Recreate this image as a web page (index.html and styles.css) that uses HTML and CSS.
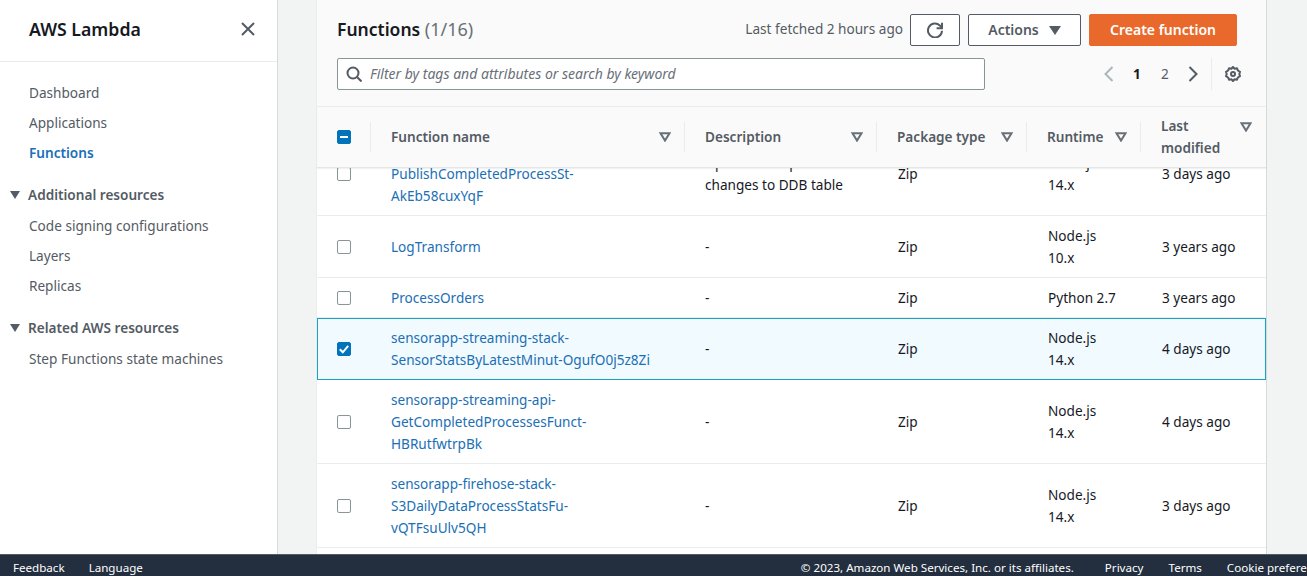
FILE: index.html
```html
<!DOCTYPE html>
<html lang="en">
<head>
<meta charset="utf-8">
<title>AWS Lambda</title>
<link rel="stylesheet" href="styles.css">
</head>
<body>
<div class="shell">
  <aside class="side">
    <div class="side-head">
      <span class="brand">AWS Lambda</span>
      <svg class="close" viewBox="0 0 16 16" width="16" height="16"><path d="M2 2l12 12M14 2L2 14"/></svg>
    </div>
    <nav class="nav">
      <a class="nav-link">Dashboard</a>
      <a class="nav-link">Applications</a>
      <a class="nav-link active">Functions</a>
    </nav>
    <h3 class="nav-group"><span class="tri"></span>Additional resources</h3>
    <nav class="nav sub">
      <a class="nav-link">Code signing configurations</a>
      <a class="nav-link">Layers</a>
      <a class="nav-link">Replicas</a>
    </nav>
    <h3 class="nav-group"><span class="tri"></span>Related AWS resources</h3>
    <nav class="nav sub">
      <a class="nav-link">Step Functions state machines</a>
    </nav>
  </aside>
  <main class="main">
    <section class="card">
      <header class="card-head">
        <div class="title-row">
          <h2 class="title">Functions <span class="count">(1/16)</span></h2>
          <span class="fetched">Last fetched 2 hours ago</span>
          <button class="btn icon-btn"><svg viewBox="0 0 16 16" width="16" height="16"><path d="M15 8.7A7 7 0 1 1 12.8 3.4L14.6 5.6"/><path d="M15 .8V6.2H9.6"/></svg></button>
          <button class="btn actions">Actions<span class="btn-tri"></span></button>
          <button class="btn primary">Create function</button>
        </div>
        <div class="filter-row">
          <div class="search">
            <svg viewBox="0 0 16 16" width="16" height="16"><circle cx="7" cy="7" r="5.5"/><path d="M11 11l4.5 4.5"/></svg>
            <span class="placeholder">Filter by tags and attributes or search by keyword</span>
          </div>
          <div class="pager">
            <svg class="chev off" viewBox="0 0 16 16" width="16" height="16"><path d="M11.5 1L4.5 8l7 7"/></svg>
            <span class="page cur">1</span>
            <span class="page">2</span>
            <svg class="chev" viewBox="0 0 16 16" width="16" height="16"><path d="M4.5 1l7 7-7 7"/></svg>
          </div>
          <svg class="gear" viewBox="0 0 16 16" width="16" height="16"><circle cx="8" cy="8" r="2"/><path d="M8 1l1.6 1.7 2.4-.4.9 2.2 2.1 1.3-.7 2.2.7 2.2-2.1 1.3-.9 2.2-2.4-.4L8 15l-1.6-1.7-2.4.4-.9-2.2-2.1-1.3.7-2.2-.7-2.2 2.1-1.3.9-2.2 2.4.4z"/></svg>
        </div>
      </header>
      <div class="thead grid">
        <div class="th check"><span class="box on"><i class="dash"></i></span></div>
        <div class="th sep">Function name<svg class="sort" viewBox="0 0 12 10" width="12" height="10"><path d="M1.5 1.2h9L6 8.6z"/></svg></div>
        <div class="th sep">Description<svg class="sort" viewBox="0 0 12 10" width="12" height="10"><path d="M1.5 1.2h9L6 8.6z"/></svg></div>
        <div class="th sep">Package type<svg class="sort" viewBox="0 0 12 10" width="12" height="10"><path d="M1.5 1.2h9L6 8.6z"/></svg></div>
        <div class="th sep">Runtime<svg class="sort" viewBox="0 0 12 10" width="12" height="10"><path d="M1.5 1.2h9L6 8.6z"/></svg></div>
        <div class="th sep last">Last modified<svg class="sort" viewBox="0 0 12 10" width="12" height="10"><path d="M1.5 1.2h9L6 8.6z"/></svg></div>
      </div>
      <div class="tbody">
        <div class="rows">
          <div class="row grid">
            <div class="td check"><span class="box"></span></div>
            <div class="td name"><a>sensorapp-streaming-api-PublishCompletedProcessSt-AkEb58cuxYqF</a></div>
            <div class="td">Updates completed changes to DDB table</div>
            <div class="td">Zip</div>
            <div class="td">Node.js 14.x</div>
            <div class="td">3 days ago</div>
          </div>
          <div class="row grid">
            <div class="td check"><span class="box"></span></div>
            <div class="td name"><a>LogTransform</a></div>
            <div class="td">-</div>
            <div class="td">Zip</div>
            <div class="td">Node.js 10.x</div>
            <div class="td">3 years ago</div>
          </div>
          <div class="row grid">
            <div class="td check"><span class="box"></span></div>
            <div class="td name"><a>ProcessOrders</a></div>
            <div class="td">-</div>
            <div class="td">Zip</div>
            <div class="td">Python 2.7</div>
            <div class="td">3 years ago</div>
          </div>
          <div class="row grid selected">
            <div class="td check"><span class="box on"><svg viewBox="0 0 14 14" width="14" height="14"><path d="M2.8 7.3l3 3 5.4-6.4"/></svg></span></div>
            <div class="td name"><a>sensorapp-streaming-stack-SensorStatsByLatestMinut-OgufO0j5z8Zi</a></div>
            <div class="td">-</div>
            <div class="td">Zip</div>
            <div class="td">Node.js 14.x</div>
            <div class="td">4 days ago</div>
          </div>
          <div class="row grid">
            <div class="td check"><span class="box"></span></div>
            <div class="td name"><a>sensorapp-streaming-api-GetCompletedProcessesFunct-HBRutfwtrpBk</a></div>
            <div class="td">-</div>
            <div class="td">Zip</div>
            <div class="td">Node.js 14.x</div>
            <div class="td">4 days ago</div>
          </div>
          <div class="row grid">
            <div class="td check"><span class="box"></span></div>
            <div class="td name"><a>sensorapp-firehose-stack-S3DailyDataProcessStatsFu-vQTFsuUlv5QH</a></div>
            <div class="td">-</div>
            <div class="td">Zip</div>
            <div class="td">Node.js 14.x</div>
            <div class="td">3 days ago</div>
          </div>
        </div>
      </div>
    </section>
  </main>
</div>
<footer class="foot">
  <a class="foot-link">Feedback</a>
  <a class="foot-link lang">Language</a>
  <span class="copy">© 2023, Amazon Web Services, Inc. or its affiliates.</span>
  <a class="foot-link priv">Privacy</a>
  <a class="foot-link terms">Terms</a>
  <a class="foot-link cookie">Cookie preferences</a>
</footer>
</body>
</html>
```
FILE: styles.css
```css
* { box-sizing: border-box; }
html, body { margin: 0; height: 100%; overflow: hidden; }
body {
  width: 1307px; height: 576px;
  display: flex; flex-direction: column;
  font: 13.6px/22px "Noto Sans", sans-serif;
  color: #16191f;
  background: #f2f3f3;
}
.shell { display: flex; height: 554px; flex: none; overflow: hidden; }
.side { width: 278px; flex: none; background: #fff; border-right: 1px solid #d5dbdb; }
.side-head {
  height: 62px; border-bottom: 1px solid #eaeded;
  display: flex; align-items: center; justify-content: space-between;
  padding: 0 21px 3px 29px;
}
.brand { font-size: 17.7px; font-weight: 600; color: #16191f; }
.close { fill: none; stroke: #545b64; stroke-width: 2; }
.nav { display: flex; flex-direction: column; gap: 8px; padding: 20px 29px 0; }
.nav.sub { padding-top: 9px; }
.nav-link { color: #545b64; }
.nav-link.active { color: #1a6fb5; font-weight: 600; }
.nav-group {
  margin: 20px 0 0; padding-left: 10px;
  font-size: 13.6px; font-weight: 600; color: #545b64; line-height: 22px;
  display: flex; align-items: center; gap: 8px;
}
.tri { width: 0; height: 0; border: 5px solid transparent; border-top: 8px solid #545b64; border-bottom: 0; }
.main { flex: 1; padding: 0 40px 0 38px; overflow: hidden; }
.card { width: 951px; height: 100%; background: #fff; border-left: 1px solid #eaeded; border-right: 1px solid #d5dbdb; display: flex; flex-direction: column; }
.card-head { background: #fafafa; border-bottom: 1px solid #eaeded; height: 107px; padding: 14px 25px 0 20px; flex: none; }
.title-row { display: flex; align-items: center; height: 32px; padding-right: 4px; }
.title { margin: 0 0 2px; font-size: 17.5px; font-weight: 600; flex: 1; line-height: 30px; }
.count { font-weight: 400; font-size: 18px; color: #687078; }
.fetched { color: #545b64; margin: 0 7px 2px 0; }
.btn { height: 32px; border: 1px solid #545b64; border-radius: 2px; background: #fff; color: #545b64; font: 600 14px/20px "Noto Sans", sans-serif; padding: 0; display: flex; align-items: center; justify-content: center; }
.icon-btn { width: 50px; margin-right: 8px; }
.icon-btn svg { fill: none; stroke: #545b64; stroke-width: 2; }
.actions { width: 113px; gap: 10px; margin-right: 8px; }
.btn-tri { width: 0; height: 0; border: 6px solid transparent; border-top: 9px solid #545b64; border-bottom: 0; }
.primary { width: 148px; background: #e9692c; border-color: #e9692c; color: #fff; }
.filter-row { display: flex; align-items: center; margin-top: 12px; height: 32px; }
.search { width: 648px; height: 32px; background: #fff; border: 1px solid #879596; border-radius: 2px; display: flex; align-items: center; gap: 8px; padding-left: 8px; }
.search svg { fill: none; stroke: #545b64; stroke-width: 2; flex: none; }
.placeholder { font-style: italic; font-size: 14px; color: #687078; }
.pager { margin-left: auto; display: flex; align-items: center; gap: 16px; padding-right: 10px; border-right: 1px solid #eaeded; height: 32px; }
.chev { fill: none; stroke: #545b64; stroke-width: 2; }
.chev.off { stroke: #aab7b8; }
.page { color: #545b64; width: 8px; }
.page.cur { color: #16191f; font-weight: 700; margin-right: 4px; }
.gear { fill: none; stroke: #545b64; stroke-width: 2; margin-left: 13px; stroke-linejoin: round; }
.grid { display: grid; grid-template-columns: 54px 314px 192px 150px 114px 1fr; }
.thead { height: 61px; background: #fafafa; border-bottom: 1px solid #e4e6e6; box-shadow: 0 1px 1px rgba(0,28,36,.06); position: relative; z-index: 2; flex: none; }
.th { font-weight: 600; color: #545b64; display: flex; align-items: center; position: relative; padding: 0 28px 0 20px; }
.th.sep::before { content: ""; position: absolute; left: -1px; top: 15px; bottom: 15px; width: 1px; background: #eaeded; }
.th.last { padding-right: 40px; }
.sort { position: absolute; right: 14px; top: 25px; fill: none; stroke: #687078; stroke-width: 2; }
.th.last .sort { top: 15px; }
.check { padding: 0 0 0 20px; display: flex; align-items: center; }
.box { width: 14px; height: 14px; border: 1px solid #879596; border-radius: 2px; background: #fff; display: flex; align-items: center; justify-content: center; }
.box.on { background: #0073bb; border-color: #0073bb; }
.box svg { fill: none; stroke: #fff; stroke-width: 2; flex: none; }
.dash { width: 8px; height: 2px; background: #fff; }
.tbody { flex: 1; overflow: hidden; background: #fff; }
.rows { margin-top: -36px; }
.row { border-bottom: 1px solid #eaeded; align-items: center; padding: 9px 0 8px; }
.td { padding: 0 20px; }
.td:nth-child(n+4) { padding-left: 21px; }
.td.check { padding: 0 0 0 20px; }
.td.name { padding-right: 25px; }
.td.name a { color: #1a6fb5; }
.row.selected { background: #f1faff; border-bottom: 0; padding-bottom: 9px; box-shadow: inset 0 0 0 1px #1ba1c4; }
.foot { flex: none; height: 22px; background: #232f3e; border-top: 1px solid #545b64; color: #fff; display: flex; align-items: center; font-size: 11.6px; white-space: nowrap; overflow: hidden; padding: 5px 0 0 13px; }
.foot-link { color: #fff; }
.lang { margin-left: 24px; }
.copy { margin-left: 658px; }
.priv { margin-left: 31px; }
.terms { margin-left: 25px; }
.cookie { margin-left: 25px; }
```
